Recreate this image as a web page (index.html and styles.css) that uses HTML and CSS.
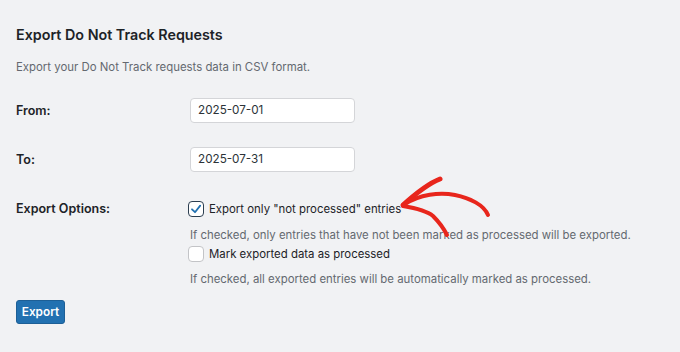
FILE: index.html
```html
<!DOCTYPE html>
<html>
<head>
<meta charset="utf-8">
<link rel="stylesheet" href="styles.css">
</head>
<body>
<div class="wrap">
  <h2 class="title">Export Do Not Track Requests</h2>
  <p class="intro">Export your Do Not Track requests data in CSV format.</p>
  <div class="form">
    <div class="row">
      <div class="label">From:</div>
      <div class="field"><div class="input">2025-07-01</div></div>
    </div>
    <div class="row">
      <div class="label">To:</div>
      <div class="field"><div class="input">2025-07-31</div></div>
    </div>
    <div class="row options">
      <div class="label opt-label">Export Options:</div>
      <div class="field col">
        <div class="check-line">
          <span class="cb checked"><svg viewBox="0 0 16 16" width="16" height="16"><path d="M4 8.3 L7 11.2 L12.2 4.6" fill="none" stroke="#2271b1" stroke-width="1.8" stroke-linecap="round" stroke-linejoin="round"/></svg></span>
          <span class="cb-text">Export only "not processed" entries</span>
        </div>
        <div class="help first">If checked, only entries that have not been marked as processed will be exported.</div>
        <div class="check-line second">
          <span class="cb"></span>
          <span class="cb-text">Mark exported data as processed</span>
        </div>
        <div class="help last">If checked, all exported entries will be automatically marked as processed.</div>
      </div>
    </div>
  </div>
  <div class="btn">Export</div>
  <svg class="arrow" viewBox="0 0 100 66" width="100" height="66">
    <path class="head" d="M8 33 C18 24 32 12 45 7" />
    <path d="M8 33 C25 22 45 20 60 23 C75 26 89 33 93 43" />
    <path d="M8 34 C20 36 32 39 38 44 C44 50 49 57 52 63" />
  </svg>
</div>
</body>
</html>
```
FILE: styles.css
```css
html, body {
  margin: 0;
  padding: 0;
  background: #f1f2f4;
}
body {
  font-family: "Inter", "Liberation Sans", sans-serif;
  color: #1d2327;
  font-size: 11.4px;
}
.wrap {
  position: relative;
  padding: 25px 16px 0 16px;
  height: 327px;
}
.title {
  margin: 0;
  font-size: 14.3px;
  line-height: 20px;
  font-weight: 600;
  color: #1d2327;
}
.intro {
  margin: 13px 0 0 0;
  line-height: 18px;
  color: #646970;
}
.form {
  margin-top: 22px;
  display: flex;
  flex-direction: column;
  gap: 24px;
}
.row {
  display: grid;
  grid-template-columns: 174px 1fr;
  align-items: center;
  height: 25px;
}
.row.options {
  height: auto;
  align-items: start;
  margin-top: 4px;
}
.label {
  font-weight: 600;
  font-size: 12.5px;
  line-height: 18px;
}
.input {
  box-sizing: border-box;
  width: 165px;
  height: 25px;
  background: #fff;
  border: 1px solid #d4d5d8;
  border-radius: 4px;
  padding-left: 7px;
  line-height: 23px;
  font-size: 11.7px;
  color: #2c3338;
}
.col {
  display: flex;
  flex-direction: column;
}
.check-line {
  display: flex;
  align-items: center;
  height: 18px;
  margin-left: -2px;
}
.cb {
  box-sizing: border-box;
  width: 16px;
  height: 16px;
  border: 1px solid #c3c4c7;
  border-radius: 4px;
  background: #fff;
  display: flex;
}
.cb.checked {
  border-color: #2c3e50;
}
.cb svg {
  margin: -1px;
}
.cb-text {
  margin-left: 5px;
  line-height: 18px;
}
.help {
  color: #646970;
  line-height: 18px;
}
.help.first { margin-top: 8px; }
.check-line.second { margin-top: 1px; }
.help.last { margin-top: 7px; }
.btn {
  display: inline-block;
  margin-top: 12px;
  box-sizing: border-box;
  width: 49px;
  height: 24px;
  line-height: 22px;
  text-align: center;
  background: #2271b1;
  border: 1px solid #1d5f96;
  border-radius: 3px;
  color: #fff;
  font-weight: 600;
  font-size: 11.8px;
}
.arrow {
  position: absolute;
  left: 395px;
  top: 172px;
}
.arrow path {
  fill: none;
  stroke: #e8261c;
  stroke-width: 4;
  stroke-linecap: round;
  stroke-linejoin: round;
}
.arrow path.head {
  stroke-width: 5;
}
```
